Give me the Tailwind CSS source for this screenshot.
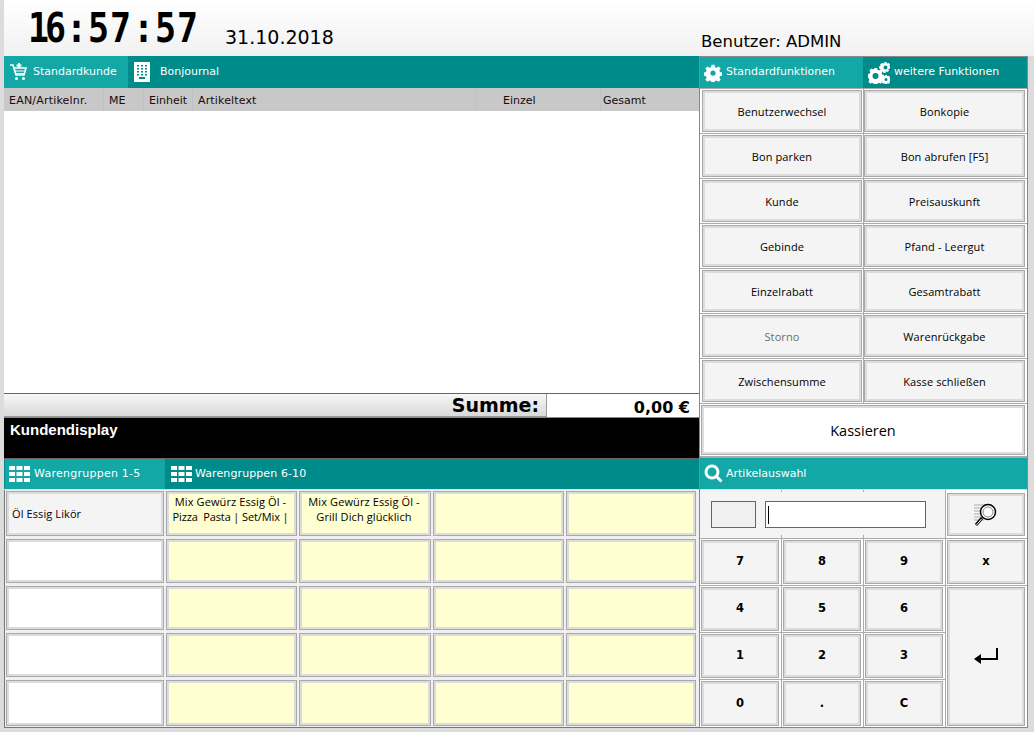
<!DOCTYPE html>
<html lang="de">
<head>
    <meta charset="UTF-8">
    <title>Kasse</title>
    <script src="https://cdn.jsdelivr.net/npm/@tailwindcss/browser@4"></script>
</head>
<body class="bg-[#dcdcdc]">
<div class="w-[1034px] h-[732px] overflow-hidden bg-[#dcdcdc] pl-[4px] font-['DejaVu_Sans',sans-serif] text-black">

    <!-- Kopfzeile -->
    <div class="h-[56px] flex bg-gradient-to-b from-white to-[#f1f1f1]">
        <div class="w-[697px] flex">
            <div class="ml-[24px] mt-[5px] flex items-center h-[46px] w-[194px] scale-y-[1.17] font-['DejaVu_Sans_Mono',monospace] font-bold text-[35px]">
                <span class="w-[38px] tracking-[-4px]">16</span><span class="w-[21px]">:</span><span class="w-[44px] ml-px tracking-[1px]">57</span><span class="w-[21px] ml-px">:</span><span class="ml-px tracking-[1px]">57</span>
            </div>
            <div class="ml-[3px] mt-[25px] text-[19px] leading-[24px]">31.10.2018</div>
        </div>
        <div class="pt-[31px] text-[16.5px] leading-[22px]">Benutzer: ADMIN</div>
    </div>

    <div class="flex">
        <!-- linke Seite -->
        <div class="w-[695px] h-[673px] flex flex-col">
            <div class="h-[32px] flex bg-[#008b8b] text-white text-[11px]">
                <div class="w-[124px] flex items-center bg-[#13a8a6]">
                    <svg class="ml-[6px]" width="17" height="18" viewBox="0 0 17 18" fill="none" stroke="white">
                        <path d="M0 2h3l3 10h8l2-7H4" stroke-width="1.6"/>
                        <path d="M5 8h10M6 10.500h9" stroke-width="1"/>
                        <path d="M9 0v5M6.500 2.500h5" stroke-width="1.800"/>
                        <circle cx="6.500" cy="15.500" r="1.500" fill="white" stroke="none"/>
                        <circle cx="13.500" cy="15.500" r="1.500" fill="white" stroke="none"/>
                    </svg>
                    <span class="ml-[6px]">Standardkunde</span>
                </div>
                <div class="flex items-center">
                    <svg class="ml-[6px]" width="16" height="20" viewBox="0 0 16 20">
                        <path fill-rule="evenodd" fill="white" d="M0 0h16v20H0zM3 3v1.500h2V3zM7 3v1.500h2V3zM11 3v1.500h2V3zM3 6v1.500h2V6zM7 6v1.500h2V6zM11 6v1.500h2V6zM3 9v1.500h2V9zM7 9v1.500h2V9zM11 9v1.500h2V9zM3 12v1.500h2V12zM7 12v1.500h2V12zM11 12v1.500h2V12zM5 15v2h6v-2z"/>
                    </svg>
                    <span class="ml-[10px]">Bonjournal</span>
                </div>
            </div>
            <div class="h-[23px] flex items-center bg-[#c8c8c8] text-[11px] text-[#1a0a0a]">
                <div class="w-[100px] h-full flex items-center pl-[5px] pt-[3px] tracking-[.2px] border-r border-[#c2c2c2]">EAN/Artikelnr.</div>
                <div class="w-[40px] h-full flex items-center pl-[5px] pt-[3px] border-r border-[#c2c2c2]">ME</div>
                <div class="w-[49px] h-full flex items-center pl-[5px] pt-[3px] border-r border-[#c2c2c2]">Einheit</div>
                <div class="w-[284px] h-full flex items-center pl-[5px] pt-[3px] tracking-[.15px] border-r border-[#c2c2c2]">Artikeltext</div>
                <div class="w-[124px] h-full flex items-center pl-[26px] pt-[3px] border-r border-[#c2c2c2]">Einzel</div>
                <div class="flex-1 h-full flex items-center pl-[2px] pt-[3px]">Gesamt</div>
            </div>
            <div class="h-[282px] bg-white"></div>

            <!-- Summe -->
            <div class="h-[25px] flex border-t border-[#666] border-b border-b-[#888]">
                <div class="w-[543px] h-full flex items-center justify-end pr-[7px] pt-[1px] bg-gradient-to-b from-[#f7f7f7] to-[#d9d9d9] border-r border-b border-[#999] font-bold text-[19px]">Summe:</div>
                <div class="flex-1 bg-white flex items-center justify-end pr-[9px] pt-[4px] font-bold text-[16px]">0,00 €</div>
            </div>
            <div class="h-[41px] bg-black border-b border-[#666] text-white font-['Liberation_Sans',sans-serif] font-bold text-[15px] leading-[17px] pl-[6px] pt-[3px]">Kundendisplay</div>

            <div class="h-[31px] flex bg-[#008b8b] text-white text-[11px] border-b border-[#ddd]">
                <div class="w-[160px] flex items-center bg-[#13a8a6] ml-px">
                    <svg class="ml-[4px]" width="21" height="16" viewBox="0 0 21 16" fill="white">
                        <path d="M0 0h6v4H0zM7.500 0h6v4h-6zM15 0h6v4h-6zM0 6h6v4H0zM7.500 6h6v4h-6zM15 6h6v4h-6zM0 12h6v4H0zM7.500 12h6v4h-6zM15 12h6v4h-6z"/>
                    </svg>
                    <span class="ml-[4px] pt-px tracking-[.25px]">Warengruppen 1-5</span>
                </div>
                <div class="flex items-center">
                    <svg class="ml-[6px]" width="21" height="16" viewBox="0 0 21 16" fill="white">
                        <path d="M0 0h6v4H0zM7.500 0h6v4h-6zM15 0h6v4h-6zM0 6h6v4H0zM7.500 6h6v4h-6zM15 6h6v4h-6zM0 12h6v4H0zM7.500 12h6v4h-6zM15 12h6v4h-6z"/>
                    </svg>
                    <span class="ml-[3px] pt-px tracking-[.1px]">Warengruppen 6-10</span>
                </div>
            </div>

            <!-- Warengruppen -->
            <div class="h-[238px] bg-[#f0f0f0] border-l border-b border-[#777] pl-px pt-px grid grid-cols-[158px_131px_132px_131px_130px] grid-rows-[45px_44px_44px_44px_46px] gap-x-[2px] gap-y-[3px] font-['Open_Sans',sans-serif] text-[11px] leading-[15px] tracking-[.1px]">
                <div class="border border-[#a9a9a9] bg-[#f4f4f4] shadow-[inset_0_0_0_2px_#dcdcdc] flex items-center pl-[5px]">Öl Essig Likör</div>
                <div class="border border-[#a9a9a9] bg-[#ffffd2] shadow-[inset_0_0_0_2px_#dcdcdc] text-center pt-[2px] pr-[2px]">Mix Gewürz Essig Öl -<br><span class="tracking-[-.12px]">Pizza&nbsp; Pasta | Set/Mix |</span></div>
                <div class="border border-[#a9a9a9] bg-[#ffffd2] shadow-[inset_0_0_0_2px_#dcdcdc] text-center pt-[2px] pr-[2px]">Mix Gewürz Essig Öl -<br>Grill Dich glücklich</div>
                <div class="border border-[#a9a9a9] bg-[#ffffd2] shadow-[inset_0_0_0_2px_#dcdcdc]"></div>
                <div class="border border-[#a9a9a9] bg-[#ffffd2] shadow-[inset_0_0_0_2px_#dcdcdc]"></div>

                <div class="border border-[#a9a9a9] bg-white shadow-[inset_0_0_0_2px_#dcdcdc]"></div>
                <div class="border border-[#a9a9a9] bg-[#ffffd2] shadow-[inset_0_0_0_2px_#dcdcdc]"></div>
                <div class="border border-[#a9a9a9] bg-[#ffffd2] shadow-[inset_0_0_0_2px_#dcdcdc]"></div>
                <div class="border border-[#a9a9a9] bg-[#ffffd2] shadow-[inset_0_0_0_2px_#dcdcdc]"></div>
                <div class="border border-[#a9a9a9] bg-[#ffffd2] shadow-[inset_0_0_0_2px_#dcdcdc]"></div>

                <div class="border border-[#a9a9a9] bg-white shadow-[inset_0_0_0_2px_#dcdcdc]"></div>
                <div class="border border-[#a9a9a9] bg-[#ffffd2] shadow-[inset_0_0_0_2px_#dcdcdc]"></div>
                <div class="border border-[#a9a9a9] bg-[#ffffd2] shadow-[inset_0_0_0_2px_#dcdcdc]"></div>
                <div class="border border-[#a9a9a9] bg-[#ffffd2] shadow-[inset_0_0_0_2px_#dcdcdc]"></div>
                <div class="border border-[#a9a9a9] bg-[#ffffd2] shadow-[inset_0_0_0_2px_#dcdcdc]"></div>

                <div class="border border-[#a9a9a9] bg-white shadow-[inset_0_0_0_2px_#dcdcdc]"></div>
                <div class="border border-[#a9a9a9] bg-[#ffffd2] shadow-[inset_0_0_0_2px_#dcdcdc]"></div>
                <div class="border border-[#a9a9a9] bg-[#ffffd2] shadow-[inset_0_0_0_2px_#dcdcdc]"></div>
                <div class="border border-[#a9a9a9] bg-[#ffffd2] shadow-[inset_0_0_0_2px_#dcdcdc]"></div>
                <div class="border border-[#a9a9a9] bg-[#ffffd2] shadow-[inset_0_0_0_2px_#dcdcdc]"></div>

                <div class="border border-[#a9a9a9] bg-white shadow-[inset_0_0_0_2px_#dcdcdc]"></div>
                <div class="border border-[#a9a9a9] bg-[#ffffd2] shadow-[inset_0_0_0_2px_#dcdcdc]"></div>
                <div class="border border-[#a9a9a9] bg-[#ffffd2] shadow-[inset_0_0_0_2px_#dcdcdc]"></div>
                <div class="border border-[#a9a9a9] bg-[#ffffd2] shadow-[inset_0_0_0_2px_#dcdcdc]"></div>
                <div class="border border-[#a9a9a9] bg-[#ffffd2] shadow-[inset_0_0_0_2px_#dcdcdc]"></div>
            </div>
        </div>

        <!-- rechte Seite -->
        <div class="w-[329px] h-[672px] border border-[#888] bg-[#aaa] flex flex-col">
            <div class="h-[31px] flex bg-[#008b8b] text-white text-[11px]">
                <div class="w-[163px] flex items-center bg-[#13a8a6]">
                    <svg class="ml-[4px]" width="18" height="18" viewBox="0 0 24 24" fill="white">
                        <path fill-rule="evenodd" d="M10 1h4l.700 3.200 2 .800 2.800-1.800 2.800 2.800-1.800 2.800.800 2 3 .700v4l-3 .700-.800 2 1.800 2.800-2.800 2.800-2.800-1.800-2 .800-.700 3h-4l-.700-3-2-.800-2.800 1.800-2.800-2.800 1.800-2.800-.800-2-3-.700v-4l3-.700.800-2-1.800-2.800 2.800-2.800 2.800 1.800 2-.800zM12 8.500a3.500 3.500 0 1 0 0 7 3.500 3.500 0 0 0 0-7z"/>
                    </svg>
                    <span class="ml-[4px]">Standardfunktionen</span>
                </div>
                <div class="flex items-center">
                    <svg class="ml-[5px]" width="22" height="22" viewBox="0 0 22 22" fill="white">
                        <path fill-rule="evenodd" d="M6 6h3l.500 1.800 1.500.700 1.600-1 2 2-1 1.600.700 1.500 1.700.500v3l-1.700.500-.700 1.500 1 1.600-2 2-1.600-1-1.500.700-.500 1.300H6l-.500-1.300-1.500-.700-1.600 1-2-2 1-1.600-.700-1.500L0 15.600v-3l.200-.500 1.500-.500.700-1.500-1-1.600 2-2 1.600 1 1.500-.700zM7.500 11a3 3 0 1 0 0 6 3 3 0 0 0 0-6z"/>
                        <path fill-rule="evenodd" d="M16.500 0h2l.300 1.200.900.400 1-.600 1.300 1.300-.600 1 .400.900L22 4.500v2l-1.200.300-.400.900.600 1-1.300 1.300-1-.600-.900.400-.300 1.200h-2l-.300-1.200-.900-.400-1 .600-1.300-1.300.600-1-.400-.900-1.200-.300v-2l1.200-.300.400-.900-.600-1L14.300 1l1 .600.900-.400zM17.500 3.500a2 2 0 1 0 0 4 2 2 0 0 0 0-4z"/>
                        <path fill-rule="evenodd" d="M17 13h2l.200 1 .700.300.900-.500 1.200 1.200-.500.900.300.700 1 .200v2l-1 .200-.300.700.500.900-1.200 1.200-.900-.500-.700.300-.200.800h-2l-.200-.800-.700-.300-.900.500-1.200-1.200.500-.900-.300-.700-1-.200v-2l1-.200.300-.700-.500-.900 1.200-1.200.900.500.700-.300zM18 16a1.500 1.500 0 1 0 0 3 1.500 1.500 0 0 0 0-3z"/>
                    </svg>
                    <span class="ml-[4px]">weitere Funktionen</span>
                </div>
            </div>

            <!-- Funktionstasten -->
            <div class="grid grid-cols-[163px_163px] grid-rows-[repeat(7,44px)_52px] gap-px pt-px font-['Open_Sans',sans-serif] text-[11px] tracking-[.1px]">
                <div class="bg-white pl-[2px] pr-px py-px"><div class="h-full border border-[#a9a9a9] bg-[#f4f4f4] shadow-[inset_0_0_0_2px_#dcdcdc] flex items-center justify-center pt-[2px]">Benutzerwechsel</div></div>
                <div class="bg-white pr-[2px] py-px"><div class="h-full border border-[#a9a9a9] bg-[#f4f4f4] shadow-[inset_0_0_0_2px_#dcdcdc] flex items-center justify-center pt-[2px]">Bonkopie</div></div>
                <div class="bg-white pl-[2px] pr-px py-px"><div class="h-full border border-[#a9a9a9] bg-[#f4f4f4] shadow-[inset_0_0_0_2px_#dcdcdc] flex items-center justify-center pt-[2px]">Bon parken</div></div>
                <div class="bg-white pr-[2px] py-px"><div class="h-full border border-[#a9a9a9] bg-[#f4f4f4] shadow-[inset_0_0_0_2px_#dcdcdc] flex items-center justify-center pt-[2px]">Bon abrufen [F5]</div></div>
                <div class="bg-white pl-[2px] pr-px py-px"><div class="h-full border border-[#a9a9a9] bg-[#f4f4f4] shadow-[inset_0_0_0_2px_#dcdcdc] flex items-center justify-center pt-[2px]">Kunde</div></div>
                <div class="bg-white pr-[2px] py-px"><div class="h-full border border-[#a9a9a9] bg-[#f4f4f4] shadow-[inset_0_0_0_2px_#dcdcdc] flex items-center justify-center pt-[2px]">Preisauskunft</div></div>
                <div class="bg-white pl-[2px] pr-px py-px"><div class="h-full border border-[#a9a9a9] bg-[#f4f4f4] shadow-[inset_0_0_0_2px_#dcdcdc] flex items-center justify-center pt-[2px]">Gebinde</div></div>
                <div class="bg-white pr-[2px] py-px"><div class="h-full border border-[#a9a9a9] bg-[#f4f4f4] shadow-[inset_0_0_0_2px_#dcdcdc] flex items-center justify-center pt-[2px]">Pfand - Leergut</div></div>
                <div class="bg-white pl-[2px] pr-px py-px"><div class="h-full border border-[#a9a9a9] bg-[#f4f4f4] shadow-[inset_0_0_0_2px_#dcdcdc] flex items-center justify-center pt-[2px]">Einzelrabatt</div></div>
                <div class="bg-white pr-[2px] py-px"><div class="h-full border border-[#a9a9a9] bg-[#f4f4f4] shadow-[inset_0_0_0_2px_#dcdcdc] flex items-center justify-center pt-[2px]">Gesamtrabatt</div></div>
                <div class="bg-white pl-[2px] pr-px py-px"><div class="h-full border border-[#a9a9a9] bg-[#f4f4f4] shadow-[inset_0_0_0_2px_#dcdcdc] flex items-center justify-center pt-[2px] text-[#6d6d6d]">Storno</div></div>
                <div class="bg-white pr-[2px] py-px"><div class="h-full border border-[#a9a9a9] bg-[#f4f4f4] shadow-[inset_0_0_0_2px_#dcdcdc] flex items-center justify-center pt-[2px]">Warenrückgabe</div></div>
                <div class="bg-white pl-[2px] pr-px py-px"><div class="h-full border border-[#a9a9a9] bg-[#f4f4f4] shadow-[inset_0_0_0_2px_#dcdcdc] flex items-center justify-center pt-[2px]">Zwischensumme</div></div>
                <div class="bg-white pr-[2px] py-px"><div class="h-full border border-[#a9a9a9] bg-[#f4f4f4] shadow-[inset_0_0_0_2px_#dcdcdc] flex items-center justify-center pt-[2px]">Kasse schließen</div></div>
                <div class="col-span-2 bg-white pl-px pr-[2px] py-px"><div class="h-full border border-[#a9a9a9] bg-white shadow-[inset_0_0_0_2px_#dcdcdc] flex items-center justify-center pt-[2px] text-[14.5px] tracking-normal">Kassieren</div></div>
            </div>

            <!-- Artikelauswahl -->
            <div class="h-[32px] mt-[2px] flex items-center bg-[#13a8a6] text-white text-[11px] border-b border-[#ddd]">
                <svg class="ml-[4px]" width="19" height="19" viewBox="0 0 19 19" fill="none" stroke="white">
                    <circle cx="8" cy="8" r="6" stroke-width="3"/>
                    <path d="M12.500 12.500l5 5" stroke-width="3"/>
                </svg>
                <span class="ml-[3px] pt-[2px]">Artikelauswahl</span>
            </div>

            <!-- Nummernblock -->
            <div class="grid grid-cols-[81px_81px_81px_81px] grid-rows-[48px_46px_46px_46px_47px] gap-px font-['DejaVu_Sans',sans-serif] font-bold text-[11.5px]">
                <div class="relative col-span-3 bg-[#f4f4f4] flex items-center pl-[11px] pt-px">
                    <div class="absolute left-[81px] top-0 w-px h-[2px] bg-[#aaa]"></div>
                    <div class="absolute left-[163px] top-0 w-px h-[2px] bg-[#aaa]"></div>
                    <div class="absolute left-[81px] bottom-0 w-px h-[3px] bg-[#aaa]"></div>
                    <div class="absolute left-[163px] bottom-0 w-px h-[3px] bg-[#aaa]"></div>
                    <div class="w-[45px] h-[27px] border border-[#666] bg-[#f0f0f0]"></div>
                    <div class="ml-[9px] w-[161px] h-[27px] border border-[#666] bg-white flex items-center pl-[2px]"><div class="w-px h-[18px] bg-black"></div></div>
                </div>
                <div class="bg-white pl-px pr-[2px] pt-[3px] pb-[2px]"><div class="h-full border border-[#a9a9a9] bg-[#f4f4f4] shadow-[inset_0_0_0_2px_#dcdcdc] flex items-center justify-center">
                    <svg width="24" height="26" viewBox="0 0 24 26" fill="none" stroke="black">
                        <path d="M0 3h11M0 6h8M0 9h6M0 12h6M0 15h8M0 18h10" stroke="#aaa"/>
                        <circle cx="14" cy="10" r="7.500" stroke-width="1.500" fill="white"/>
                        <circle cx="14" cy="10" r="5" stroke="#888"/>
                        <path d="M8 16l-6 7" stroke-width="3"/>
                        <path d="M7.500 17l-5 6" stroke="white"/>
                    </svg>
                </div></div>

                <div class="bg-white pl-px pr-[2px] py-px"><div class="h-full border border-[#a9a9a9] bg-[#f4f4f4] shadow-[inset_0_0_0_2px_#dcdcdc] flex items-center justify-center">7</div></div>
                <div class="bg-white pl-px pr-[2px] py-px"><div class="h-full border border-[#a9a9a9] bg-[#f4f4f4] shadow-[inset_0_0_0_2px_#dcdcdc] flex items-center justify-center">8</div></div>
                <div class="bg-white pl-px pr-[2px] py-px"><div class="h-full border border-[#a9a9a9] bg-[#f4f4f4] shadow-[inset_0_0_0_2px_#dcdcdc] flex items-center justify-center">9</div></div>
                <div class="bg-white pl-px pr-[2px] py-px"><div class="h-full border border-[#a9a9a9] bg-[#f4f4f4] shadow-[inset_0_0_0_2px_#dcdcdc] flex items-center justify-center">x</div></div>

                <div class="bg-white pl-px pr-[2px] py-px"><div class="h-full border border-[#a9a9a9] bg-[#f4f4f4] shadow-[inset_0_0_0_2px_#dcdcdc] flex items-center justify-center">4</div></div>
                <div class="bg-white pl-px pr-[2px] py-px"><div class="h-full border border-[#a9a9a9] bg-[#f4f4f4] shadow-[inset_0_0_0_2px_#dcdcdc] flex items-center justify-center">5</div></div>
                <div class="bg-white pl-px pr-[2px] py-px"><div class="h-full border border-[#a9a9a9] bg-[#f4f4f4] shadow-[inset_0_0_0_2px_#dcdcdc] flex items-center justify-center">6</div></div>
                <div class="row-span-3 bg-white pl-px pr-[2px] py-px"><div class="h-full border border-[#a9a9a9] bg-[#f4f4f4] shadow-[inset_0_0_0_2px_#dcdcdc] flex items-center justify-center">
                    <svg width="24" height="17" viewBox="0 0 24 17" fill="black">
                        <path d="M22 0h2v12H6V10h16z"/>
                        <path d="M0 11l7-5v10z"/>
                    </svg>
                </div></div>

                <div class="bg-white pl-px pr-[2px] py-px"><div class="h-full border border-[#a9a9a9] bg-[#f4f4f4] shadow-[inset_0_0_0_2px_#dcdcdc] flex items-center justify-center">1</div></div>
                <div class="bg-white pl-px pr-[2px] py-px"><div class="h-full border border-[#a9a9a9] bg-[#f4f4f4] shadow-[inset_0_0_0_2px_#dcdcdc] flex items-center justify-center">2</div></div>
                <div class="bg-white pl-px pr-[2px] py-px"><div class="h-full border border-[#a9a9a9] bg-[#f4f4f4] shadow-[inset_0_0_0_2px_#dcdcdc] flex items-center justify-center">3</div></div>

                <div class="bg-white pl-px pr-[2px] py-px"><div class="h-full border border-[#a9a9a9] bg-[#f4f4f4] shadow-[inset_0_0_0_2px_#dcdcdc] flex items-center justify-center">0</div></div>
                <div class="bg-white pl-px pr-[2px] py-px"><div class="h-full border border-[#a9a9a9] bg-[#f4f4f4] shadow-[inset_0_0_0_2px_#dcdcdc] flex items-center justify-center">.</div></div>
                <div class="bg-white pl-px pr-[2px] py-px"><div class="h-full border border-[#a9a9a9] bg-[#f4f4f4] shadow-[inset_0_0_0_2px_#dcdcdc] flex items-center justify-center">C</div></div>
            </div>
        </div>
    </div>
</div>
</body>
</html>
